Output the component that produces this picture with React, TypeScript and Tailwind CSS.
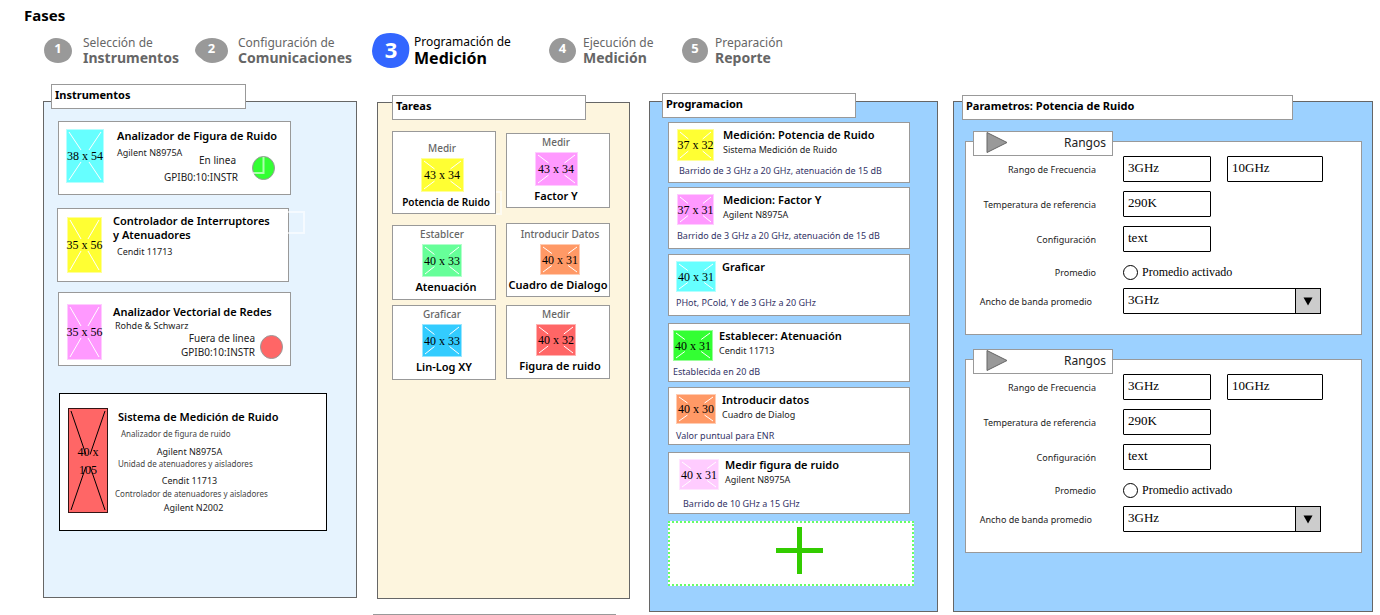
import React, { useId } from "react";

const SERIF = "font-['Liberation_Serif',serif]";

type Step = {
  n: number;
  top: string;
  bottom: string;
  blob: string;
  bw: number;
  width: string;
  gap: string;
  href: string;
};

const STEPS: Step[] = [
  { n: 1, top: "Selección de", bottom: "Instrumentos", bw: 28, width: "w-[151px]", gap: "gap-[11px]", href: "#instrumentos", blob: "M0 12C0 6 5 0 12 0C20 0 28 5 28 13C28 20 22 25 14 25C6 25 0 20 0 12Z" },
  { n: 2, top: "Configuración de", bottom: "Comunicaciones", bw: 33, width: "w-[177px]", gap: "gap-2.5", href: "#comunicaciones", blob: "M0 12C1 5 8 0 17 0C26 0 33 5 33 13C33 20 26 25 17 25C10 25 7 21 3 18C1 16 0 14 0 12Z" },
  { n: 3, top: "Programación de", bottom: "Medición", bw: 38, width: "w-[177px]", gap: "gap-1", href: "#medicion", blob: "M0 18C1 10 3 3 11 1C18 -1 27 0 32 4C37 9 38 13 37 20C36 29 28 35 19 35C9 35 0 28 0 18Z" },
  { n: 4, top: "Ejecución de", bottom: "Medición", bw: 27, width: "w-[133px]", gap: "gap-[7px]", href: "#ejecucion", blob: "M0 12C1 5 5 1 11 0C18 -1 27 5 27 13C27 20 21 25 14 25C6 25 0 19 0 12Z" },
  { n: 5, top: "Preparación", bottom: "Reporte", bw: 26, width: "w-[133px]", gap: "gap-[7px]", href: "#reporte", blob: "M0 12C1 5 5 1 11 0C19 -1 26 5 26 13C26 20 20 25 13 25C5 25 0 19 0 12Z" },
];

function StepItem({ s }: { s: Step }) {
  const active = s.n === 3;
  const h = active ? 35 : 25;
  return (
    <li className={`${s.width} shrink-0`}>
      <a href={s.href} aria-current={active ? "step" : undefined} className={`flex h-9 items-center whitespace-nowrap ${s.gap}`}>
        <span className="relative grid shrink-0 place-items-center">
          <svg width={s.bw} height={h} viewBox={`0 0 ${s.bw} ${h}`} className={active ? "fill-[#3366ff]" : "fill-[#999]"} aria-hidden="true">
            <path d={s.blob} />
          </svg>
          <span className={`absolute inset-0 flex items-center justify-center pb-0.5 font-bold text-white ${active ? "text-[22px]" : "text-[13px]"}`}>{s.n}</span>
        </span>
        <span className={`flex flex-col ${active ? "text-black" : "text-[#666]"}`}>
          <span className={active ? "text-[12px] leading-4" : "text-[12px] leading-[15px]"}>{s.top}</span>
          <span className={active ? "text-[16px] leading-[17px] font-bold" : "text-[14px] leading-[15px] font-bold"}>{s.bottom}</span>
        </span>
      </a>
    </li>
  );
}

function Placeholder({ w, h, fill, dark = false }: { w: number; h: number; fill: string; dark?: boolean }) {
  const a = 3;
  const yTop = h / 2 - 6;
  const dx = ((w - 2 * a) * (yTop - a)) / (h - 2 * a);
  const x1 = a + dx;
  const x2 = w - a - dx;
  const stroke = dark ? "#000" : "#fff";
  return (
    <span className="relative block shrink-0 self-start justify-self-start">
      <svg width={w} height={h} viewBox={`0 0 ${w} ${h}`} className="block" aria-hidden="true">
        <rect width={w} height={h} fill={fill} />
        <rect x="0.5" y="0.5" width={w - 1} height={h - 1} fill="none" stroke={stroke} strokeOpacity={dark ? 0.8 : 0.5} />
        <path
          d={`M${a} ${a}L${x1} ${yTop}M${w - a} ${a}L${x2} ${yTop}M${a} ${h - a}L${x1} ${h - yTop}M${w - a} ${h - a}L${x2} ${h - yTop}`}
          stroke={stroke}
          fill="none"
        />
      </svg>
      <span className={`absolute inset-0 flex items-center justify-center text-center text-[12px] text-black ${SERIF} ${dark ? "leading-[18px]" : "leading-[14px] whitespace-nowrap"}`}>
        {dark ? <span>{w} x<br />{h}</span> : `${w} x ${h}`}
      </span>
    </span>
  );
}

function Tab({ className, children }: { className: string; children: React.ReactNode }) {
  return (
    <h2 className={`flex h-[25px] items-center border border-[#999] bg-white pb-0.5 pl-[3px] text-[11px] font-bold text-black ${className}`}>{children}</h2>
  );
}

function Dot({ className, ghost = false }: { className: string; ghost?: boolean }) {
  return (
    <svg width="23" height="24" viewBox="0 0 23 24" className={`shrink-0 ${className}`} aria-hidden="true">
      <ellipse cx="11.5" cy="12" rx="11" ry="11.5" stroke="#999" />
      {ghost && <path d="M11.5 1V17H1" fill="none" stroke="#fff" strokeOpacity="0.6" strokeWidth="2" />}
    </svg>
  );
}

function Instrumentos() {
  return (
    <section className="min-w-0 grow-[312] basis-0 border border-[#666] bg-[#e6f3fe] pb-[66px]">
      <Tab className="-mt-[18px] mr-[110px] ml-[7px]">Instrumentos</Tab>

      <div className="mt-3 mr-[65px] ml-3.5 flex h-[74px] border border-[#999] bg-white pt-[7px] pl-[7px] whitespace-nowrap">
        <Placeholder w={38} h={54} fill="#66ffff" />
        <div className="ml-[13px] min-w-0 flex-1">
          <h3 className="-mt-px text-[11px] leading-4 font-semibold text-black">Analizador de Figura de Ruido</h3>
          <div className="flex">
            <div className="w-[121px]">
              <div className="flex justify-between">
                <p className="mt-[3px] text-[9px] leading-3">Agilent N8975A</p>
                <p className="mt-2 pr-0.5 text-[10px] leading-[17px]">En linea</p>
              </div>
              <p className="text-right text-[10px] leading-[17px]">GPIB0:10:INSTR</p>
            </div>
            <Dot className="mt-3 ml-3.5 fill-[#33ff33]" ghost />
          </div>
        </div>
      </div>

      <div className="relative mt-[13px] mr-[67px] ml-[13px] flex h-[74px] border border-[#999] bg-white pt-2 pl-[9px] whitespace-nowrap">
        <Placeholder w={35} h={56} fill="#ffff33" />
        <div className="-mt-[3px] ml-[11px]">
          <h3 className="text-[11px] leading-[14px] font-semibold text-black">
            Controlador de Interruptores
            <br />y Atenuadores
          </h3>
          <p className="mt-1 pl-1 text-[9px] leading-3">Cendit 11713</p>
        </div>
        <span className="absolute top-[2px] -right-[17px] h-[23px] w-[17px] border-2 border-l-0 border-white/60" />
      </div>

      <div className="mt-2.5 mr-[65px] ml-3.5 flex h-[74px] border border-[#999] bg-white pt-[11px] pl-2 whitespace-nowrap">
        <Placeholder w={35} h={56} fill="#ff99ff" />
        <div className="ml-[11px] min-w-0 flex-1">
          <h3 className="text-[11px] leading-4 font-semibold text-black">Analizador Vectorial de Redes</h3>
          <div className="flex">
            <div className="w-[142px]">
              <div className="flex justify-between">
                <p className="pl-0.5 text-[9px] leading-3">Rohde &amp; Schwarz</p>
                <p className="mt-[11px] text-[10px] leading-[14px]">Fuera de linea</p>
              </div>
              <p className="text-right text-[10px] leading-[14px]">GPIB0:10:INSTR</p>
            </div>
            <Dot className="mt-[15px] ml-[5px] fill-[#ff6666]" />
          </div>
        </div>
      </div>

      <div className="mt-[27px] mr-[29px] ml-[15px] flex h-[138px] border border-black bg-white pt-3.5 pl-2 whitespace-nowrap">
        <Placeholder w={40} h={105} fill="#ff6666" dark />
        <div className="ml-[7px]">
          <h3 className="pl-[3px] text-[11px] leading-[18px] font-semibold text-black">Sistema de Medición de Ruido</h3>
          <dl className="mt-0.5 w-[149px] text-[#444]">
            <dt className="pl-1.5 text-[8px] leading-3">Analizador de figura de ruido</dt>
            <dd className="mt-1.5 text-center text-[9px] leading-3 text-[#222]">Agilent N8975A</dd>
            <dt className="pl-[3px] text-[8px] leading-3">Unidad de atenuadores y aisladores</dt>
            <dd className="mt-[5px] text-center text-[9px] leading-3 text-[#222]">Cendit 11713</dd>
            <dt className="mt-px text-[8px] leading-3">Controlador de atenuadores y aisladores</dt>
            <dd className="mt-0.5 pl-2 text-center text-[9px] leading-3 text-[#222]">Agilent N2002</dd>
          </dl>
        </div>
      </div>
    </section>
  );
}

type Task = { kind: string; name: string; w: number; h: number; fill: string; box: string; art: string; label: string };

const TASKS_LEFT: Task[] = [
  { kind: "Medir", name: "Potencia de Ruido", w: 43, h: 34, fill: "#ffff33", box: "h-[83px] pt-2", art: "pr-1", label: "pl-1 text-[10px]" },
  { kind: "Establcer", name: "Atenuación", w: 40, h: 33, fill: "#66ff99", box: "mt-[11px] h-[75px]", art: "pr-1", label: "pl-1 text-[11px]" },
  { kind: "Graficar", name: "Lin-Log XY", w: 40, h: 33, fill: "#33ccff", box: "mt-[5px] h-[75px]", art: "pr-1", label: "text-[11px]" },
];

const TASKS_RIGHT: Task[] = [
  { kind: "Medir", name: "Factor Y", w: 43, h: 34, fill: "#ff99ff", box: "h-[75px]", art: "pr-1", label: "pr-1 text-[11px]" },
  { kind: "Introducir Datos", name: "Cuadro de Dialogo", w: 40, h: 31, fill: "#ff9966", box: "mt-[15px] h-[74px] pt-0.5", art: "pl-1", label: "text-[11px]" },
  { kind: "Medir", name: "Figura de ruido", w: 40, h: 32, fill: "#ff6666", box: "mt-2 h-[74px]", art: "pr-1", label: "pl-1 text-[11px]" },
];

function TaskCard({ t }: { t: Task }) {
  return (
    <li className={`flex flex-col items-center border border-[#999] bg-white whitespace-nowrap ${t.box}`}>
      <span className={`text-[10px] leading-4 font-medium text-[#666] ${t.art}`}>{t.kind}</span>
      <span className={`mt-0.5 ${t.art}`}>
        <Placeholder w={t.w} h={t.h} fill={t.fill} />
      </span>
      <span className={`mt-0.5 leading-4 font-semibold text-black ${t.label}`}>{t.name}</span>
    </li>
  );
}

function Tareas() {
  return (
    <section className="mt-px ml-5 min-w-0 grow-[251] basis-0 border border-[#666] bg-[#fdf5de] pb-[218px]">
      <Tab className="-mt-2 mr-[43px] ml-3.5">Tareas</Tab>
      <div className="relative mr-[19px] ml-3.5 grid grid-cols-2 gap-x-2.5">
        <ul className="mt-[11px]">
          {TASKS_LEFT.map((t) => <TaskCard key={t.name} t={t} />)}
        </ul>
        <ul className="mt-[13px]">
          {TASKS_RIGHT.map((t) => <TaskCard key={t.name} t={t} />)}
        </ul>
        <span className="absolute top-[71px] left-[104px] h-6 w-1.5 border-2 border-l-0 border-white/60" />
      </div>
    </section>
  );
}

type Program = { title: string; sub?: string; desc: string; w: number; h: number; fill: string; box: string; indent: string };

const PROGRAM: Program[] = [
  { title: "Medición: Potencia de Ruido", sub: "Sistema Medición de Ruido", desc: "Barrido de 3 GHz a 20 GHz, atenuación de 15 dB", w: 37, h: 32, fill: "#ffff33", box: "h-[61px] pl-2", indent: "pl-0.5" },
  { title: "Medicion: Factor Y", sub: "Agilent N8975A", desc: "Barrido de 3 GHz a 20 GHz, atenuación de 15 dB", w: 37, h: 31, fill: "#ff99ff", box: "mt-1 h-[62px] pl-2", indent: "" },
  { title: "Graficar", desc: "PHot, PCold, Y de 3 GHz a 20 GHz", w: 40, h: 31, fill: "#66ffff", box: "mt-[5px] h-[62px] pl-[7px]", indent: "" },
  { title: "Establecer: Atenuación", sub: "Cendit 11713", desc: "Establecida en 20 dB", w: 40, h: 31, fill: "#33ff33", box: "mt-[7px] h-[59px] pl-1", indent: "" },
  { title: "Introducir datos", sub: "Cuadro de Dialog", desc: "Valor puntual para ENR", w: 40, h: 30, fill: "#ff9966", box: "mt-[5px] h-[58px] pl-[7px]", indent: "" },
  { title: "Medir figura de ruido", sub: "Agilent N8975A", desc: "Barrido de 10 GHz a 15 GHz", w: 40, h: 31, fill: "#ffccff", box: "mt-[7px] h-[62px] pl-2.5", indent: "pt-[3px] pl-1" },
];

function Programacion() {
  return (
    <section className="ml-[19px] min-w-0 grow-[287] basis-0 border border-[#666] bg-[#9cd1ff] pb-[25px]">
      <Tab className="-mt-[9px] mr-[81px] ml-3">Programacion</Tab>
      <div className="mt-1 mr-[27px] ml-[18px]">
        {PROGRAM.map((p) => (
          <article key={p.title} className={`border border-[#999] bg-white pt-1.5 whitespace-nowrap ${p.box}`}>
            <div className="grid h-[35px] grid-cols-[46px_1fr]">
              <Placeholder w={p.w} h={p.h} fill={p.fill} />
              <div className="-mt-px">
                <h3 className="text-[11px] leading-[13px] font-semibold text-black">{p.title}</h3>
                {p.sub && <p className="mt-0.5 text-[9px] leading-[14px]">{p.sub}</p>}
              </div>
            </div>
            <p className={`text-[9px] leading-[14px] text-[#333366] ${p.indent}`}>{p.desc}</p>
          </article>
        ))}
        <button
          type="button"
          aria-label="+"
          className="mt-[7px] -mr-1 flex h-[65px] w-[calc(100%+4px)] items-center justify-center border-2 border-dotted border-[#66ff66] bg-white pb-1.5 pl-4"
        >
          <svg width="47" height="47" viewBox="0 0 47 47" aria-hidden="true">
            <path d="M23.5 0V47M0 23.5H47" stroke="#33cc00" strokeWidth="5" />
          </svg>
        </button>
      </div>
    </section>
  );
}

const FIELD = `h-[26px] border border-black bg-white pb-0.5 pl-1 text-[13px] text-black rounded-[1px] ${SERIF}`;
const LABEL = "w-[130px] shrink-0 pt-0.5 text-right text-[9px] leading-3";

function Rangos({ className }: { className: string }) {
  const id = useId();
  return (
    <section className={`mr-2.5 ml-[11px] border border-[#999] bg-white pb-5 ${className}`}>
      <button type="button" className="-mt-[11px] ml-[7px] flex h-[25px] w-[140px] items-start justify-between border border-[#999] bg-white pr-1.5 pl-3">
        <svg width="22" height="21" viewBox="0 0 22 21" aria-hidden="true">
          <path d="M1 0.5L21 10.5L1 20.5Z" fill="#999" stroke="#666" />
        </svg>
        <span className="text-[12px] leading-[21px] text-[#222]">Rangos</span>
      </button>
      <div className="flex items-center gap-[27px]">
        <label htmlFor={`${id}f`} className={LABEL}>Rango de Frecuencia</label>
        <div className="flex gap-4">
          <input id={`${id}f`} defaultValue="3GHz" className={`w-[88px] ${FIELD}`} />
          <input aria-label="Rango de Frecuencia" defaultValue="10GHz" className={`w-[96px] ${FIELD}`} />
        </div>
      </div>
      <div className="mt-[9px] flex items-center gap-[27px]">
        <label htmlFor={`${id}t`} className={LABEL}>Temperatura de referencia</label>
        <input id={`${id}t`} defaultValue="290K" className={`w-[88px] ${FIELD}`} />
      </div>
      <div className="mt-[9px] flex items-center gap-[27px]">
        <label htmlFor={`${id}c`} className={LABEL}>Configuración</label>
        <input id={`${id}c`} defaultValue="text" className={`w-[88px] ${FIELD}`} />
      </div>
      <div className="mt-1.5 flex h-7 items-center gap-[27px]">
        <span className={LABEL}>Promedio</span>
        <label className={`flex items-center gap-1 text-[12px] leading-[14px] text-black ${SERIF}`}>
          <input type="radio" name={`${id}r`} className="size-[15px] appearance-none rounded-full border border-black bg-white checked:bg-black" />
          Promedio activado
        </label>
      </div>
      <div className="mt-0.5 flex items-center gap-[27px]">
        <label htmlFor={`${id}a`} className={`${LABEL} pr-1`}>Ancho de banda promedio</label>
        <div className="relative">
          <select id={`${id}a`} className={`block w-[198px] appearance-none ${FIELD}`}>
            <option>3GHz</option>
          </select>
          <span className="pointer-events-none absolute inset-y-0 right-0 flex w-[26px] items-center justify-center border border-black bg-[#ccc]">
            <svg width="10" height="9" viewBox="0 0 10 9" aria-hidden="true">
              <path d="M0.5 0.5H9.5L5 8.5Z" fill="#000" />
            </svg>
          </span>
        </div>
      </div>
    </section>
  );
}

function Parametros() {
  return (
    <section className="ml-[15px] min-w-0 grow-[418] basis-0 border border-[#666] bg-[#9cd1ff] pb-[58px]">
      <Tab className="-mt-[7px] mr-[79px] ml-2">Parametros: Potencia de Ruido</Tab>
      <Rangos className="mt-[21px]" />
      <Rangos className="mt-6" />
    </section>
  );
}

export default function App() {
  return (
    <div className="bg-white font-['Noto_Sans',sans-serif] text-[#222]">
      <header className="pt-[5px]">
        <h1 className="pl-6 text-[15px] leading-5 font-bold text-black">Fases</h1>
        <nav className="mt-[7px] pl-11">
          <ol className="flex">
            {STEPS.map((s) => <StepItem key={s.n} s={s} />)}
          </ol>
        </nav>
      </header>
      <main className="flex items-start pt-[33px] pr-[7px] pl-[43px]">
        <Instrumentos />
        <Tareas />
        <Programacion />
        <Parametros />
      </main>
      <div className="mt-0.5 ml-[373px] w-[243px] border-t border-[#999]" />
    </div>
  );
}
